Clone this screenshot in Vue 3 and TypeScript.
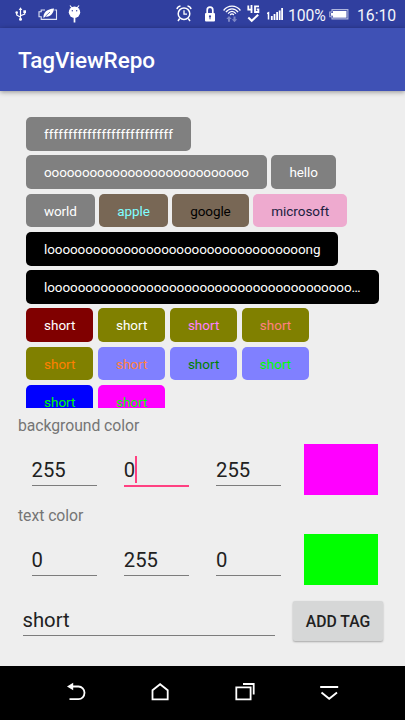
<script setup lang="ts">
import { computed, ref } from 'vue'

interface Tag {
  text: string
  bg: string
  fg: string
  spacing?: number
}

const GRAY = '#808080'
const BROWN = '#786755'
const OLIVE = '#808000'
const VIOLET = '#8080ff'

const tagRows = ref<Tag[][]>([
  [{ text: 'f'.repeat(27), bg: GRAY, fg: '#fff', spacing: 0.09 }],
  [
    { text: 'o'.repeat(27), bg: GRAY, fg: '#fff', spacing: -0.11 },
    { text: 'hello', bg: GRAY, fg: '#fff', spacing: -0.1 },
  ],
  [
    { text: 'world', bg: GRAY, fg: '#fff', spacing: -0.14 },
    { text: 'apple', bg: BROWN, fg: '#80ffff', spacing: -0.06 },
    { text: 'google', bg: BROWN, fg: '#000', spacing: -0.1 },
    { text: 'microsoft', bg: '#eeaacf', fg: '#202040', spacing: -0.02 },
  ],
  [{ text: 'l' + 'o'.repeat(34) + 'ng', bg: '#000', fg: '#fff', spacing: -0.1 }],
  [{ text: 'l' + 'o'.repeat(40) + '…', bg: '#000', fg: '#fff', spacing: -0.09 }],
  [
    { text: 'short', bg: '#800000', fg: '#fff' },
    { text: 'short', bg: OLIVE, fg: '#fff' },
    { text: 'short', bg: OLIVE, fg: '#ff80ff' },
    { text: 'short', bg: OLIVE, fg: '#ff8080' },
  ],
  [
    { text: 'short', bg: OLIVE, fg: '#ff8000' },
    { text: 'short', bg: VIOLET, fg: '#ff8040' },
    { text: 'short', bg: VIOLET, fg: '#008000' },
    { text: 'short', bg: VIOLET, fg: '#00ff00' },
  ],
  [
    { text: 'short', bg: '#0000ff', fg: '#00ff00' },
    { text: 'short', bg: '#ff00ff', fg: '#00ff00' },
  ],
])

const background = ref([255, 0, 255])
const foreground = ref([0, 255, 0])
const tagText = ref('short')

const groups = computed(() => [
  { label: 'background color', values: background.value, focus: 1 },
  { label: 'text color', values: foreground.value, focus: -1 },
])

const rgb = (v: number[]): string => `rgb(${v.join(',')})`

function addTag(): void {
  tagRows.value.push([
    { text: tagText.value, bg: rgb(background.value), fg: rgb(foreground.value) },
  ])
}
</script>

<template>
  <div class="screen">
    <div class="status">
      <svg class="i-usb" width="12" height="14" viewBox="0 0 12 14" fill="none" stroke="#fff" stroke-width="1.2">
        <path d="M5.5 2v10M5.5 10.2L1.7 8V5.5M5.5 8.7L9.7 7V4.5" />
        <path d="M3.7 3L5.5 0.3L7.3 3z" fill="#fff" stroke="none" />
        <circle cx="1.7" cy="5.6" r="1.3" fill="#fff" stroke="none" />
        <circle cx="5.5" cy="12.2" r="1.5" fill="#fff" stroke="none" />
        <path d="M8.3 3.3h2.7v2.7h-2.7z" fill="#fff" stroke="none" />
      </svg>
      <svg class="i-eco" width="20" height="13" viewBox="0 0 20 13" fill="none" stroke="#dfe3f5" stroke-width="1.1">
        <path d="M7 2H3.2v1.8H1v5h2.2v2.6h15.3V2h-2" />
        <path d="M5.5 10C5 4.500 9 1.200 16 0.600C15.500 5.500 12.500 9.200 7.500 8.600z" fill="#fff" stroke="none" />
        <path d="M7.500 8.200L12 4" stroke="#303f9f" stroke-width=".7" />
      </svg>
      <svg class="i-bug" width="13" height="18" viewBox="0 0 13 18">
        <path d="M2 .5L4 3M11 .5L9 3" stroke="#fff" stroke-width="1.2" />
        <circle cx="6.500" cy="7.300" r="5.700" fill="#fff" />
        <path d="M6.500 12v5.500" stroke="#fff" stroke-width="1.700" />
        <circle cx="4.300" cy="5.700" r=".7" fill="#303f9f" />
        <circle cx="8.700" cy="5.700" r=".7" fill="#303f9f" />
      </svg>
      <span class="spacer"></span>
      <svg class="i-alarm" width="16" height="17" viewBox="0 0 16 17" fill="none" stroke="#fff" stroke-width="1.500">
        <circle cx="8" cy="8.700" r="5.800" />
        <path d="M8 5.300v3.900h3" stroke-width="1.300" />
        <path d="M1 4.200C1.300 2.500 2.700 1.200 4.500 1M15 4.200C14.700 2.500 13.300 1.200 11.500 1M3.700 13.500L2 16M12.300 13.500L14 16" />
      </svg>
      <svg class="i-lock" width="10" height="16" viewBox="0 0 10 16">
        <path d="M2.200 8V4a2.800 2.800 0 0 1 5.600 0v4" fill="none" stroke="#fff" stroke-width="1.700" />
        <rect x="0" y="7" width="10" height="8.500" rx="1" fill="#fff" />
        <circle cx="5" cy="10.300" r="1.100" fill="#303f9f" />
        <path d="M5 10v3.300" stroke="#303f9f" stroke-width="1" />
      </svg>
      <svg class="i-wifi" width="18" height="18" viewBox="0 0 18 18" fill="none" stroke="#fff" stroke-width="1.300">
        <path d="M.6 5.500C5-.3 13-.3 17.400 5.500M2.900 7.200C6.200 2.700 11.800 2.700 15.100 7.200M5.100 8.700C7.300 5.700 10.700 5.700 12.900 8.700M7.200 10C8.300 8.600 9.700 8.600 10.800 10" />
        <path d="M6 11L3.300 14H5v2.700h2V14h1.700zM11.500 17.200L8.800 14.300h1.700v-2.700h2v2.700h1.700z" fill="#7d87c5" stroke="none" />
      </svg>
      <svg class="i-4g" width="13" height="18" viewBox="0 0 13 18" fill="none" stroke="#fff" stroke-width="1.800">
        <path d="M1.300 0.500v4.200h4.200M4.500 0v8M12 1.300H8v5.700h3.400V4.300H9.700" />
        <path d="M1.300 12.500L4.700 15.800L11.200 9.800" stroke-width="2" />
      </svg>
      <svg class="i-signal" width="16" height="12" viewBox="0 0 16 12" stroke="#fff">
        <path d="M0 5.500L1.500 4.700V11.500" fill="none" stroke-width="1.500" />
        <path d="M4.800 12V8M7.500 12V6M10.100 12V4M12.700 12V2.500M15.100 12V0" stroke-width="1.800" />
      </svg>
      <span class="percent">100%</span>
      <svg class="i-battery" width="20" height="11" viewBox="0 0 20 11">
        <path d="M3 .6h15.900v9.300H3V7.700H.8V3H3z" fill="none" stroke="#aeb5dc" stroke-width="1.100" />
        <rect x="4" y="2" width="13.500" height="6.700" fill="#fff" />
        <path d="M2 4h2v2.800H2z" fill="#fff" />
      </svg>
      <span class="clock">16:10</span>
    </div>

    <header class="appbar">TagViewRepo</header>

    <main class="content">
      <div class="tags">
        <div v-for="(row, r) in tagRows" :key="r" class="tag-row">
          <span
            v-for="(tag, t) in row"
            :key="t"
            class="tag"
            :style="{ background: tag.bg, color: tag.fg, letterSpacing: (tag.spacing ?? 0) + 'px' }"
          >{{ tag.text }}</span>
        </div>
      </div>

      <section v-for="g in groups" :key="g.label" class="group">
        <div class="label">{{ g.label }}</div>
        <div class="channels">
          <div v-for="(v, n) in g.values" :key="n" class="cell">
            <div class="field" :class="{ focused: n === g.focus }">
              <span>{{ v }}</span><i v-if="n === g.focus" class="caret"></i>
            </div>
          </div>
          <div class="cell">
            <div class="swatch" :style="{ background: rgb(g.values) }"></div>
          </div>
        </div>
      </section>

      <div class="add">
        <div class="field wide"><span>{{ tagText }}</span></div>
        <button class="btn" type="button" @click="addTag">ADD TAG</button>
      </div>
    </main>

    <nav class="nav">
      <svg width="24" height="24" viewBox="0 0 24 24" fill="none" stroke="#fff" stroke-width="1.800">
        <path d="M7 6.500h7.500a6 6.300 0 0 1 0 12.600H5.500" />
        <path d="M3 6.500L9.200 2.800v7.400z" fill="#fff" stroke="none" />
      </svg>
      <svg width="24" height="24" viewBox="0 0 24 24" fill="none" stroke="#fff" stroke-width="1.800">
        <path d="M4.500 19.300V10.200L12.100 4.200L19.700 10.200V19.300z" />
      </svg>
      <svg width="24" height="24" viewBox="0 0 24 24" fill="none" stroke="#fff" stroke-width="1.800">
        <path d="M3.300 7.300h14.300v12H3.300z" />
        <path d="M10 4H20.700V14.500" />
      </svg>
      <svg width="24" height="24" viewBox="0 0 24 24" fill="none" stroke="#fff" stroke-width="1.900">
        <path d="M3.200 7h18M4.500 12.500L12.200 18.700L20 12.500" />
      </svg>
    </nav>
  </div>
</template>

<style>
body {
  background: #eeeeee;
  overflow: hidden;
}
</style>

<style scoped>
.screen {
  display: flex;
  flex-direction: column;
  width: 405px;
  height: 720px;
  overflow: hidden;
  background: #eeeeee;
  font-family: Roboto, 'Liberation Sans', sans-serif;
  color: #212121;
}
.status {
  display: flex;
  flex: none;
  align-items: flex-start;
  height: 28px;
  padding: 0 9px 0 15px;
  box-sizing: border-box;
  background: #303f9f;
  color: #f4f5fb;
  font-size: 15.75px;
  line-height: 31px;
  white-space: nowrap;
}
.status svg { flex: none; }
.spacer { flex: 1; }
.i-usb { margin-top: 7px; }
.i-eco { margin: 8px 0 0 11px; }
.i-bug { margin: 5px 0 0 10px; }
.i-alarm { margin-top: 5px; }
.i-lock { margin: 6px 0 0 13px; }
.i-wifi { margin: 5px 0 0 8px; }
.i-4g { margin: 5px 0 0 6px; }
.i-signal { margin: 8px 0 0 7px; }
.percent { width: 37px; margin-left: 5px; letter-spacing: -0.1px; }
.i-battery { margin: 9px 0 0 4px; }
.clock { width: 39px; margin-left: 8px; }
.appbar {
  position: relative;
  flex: none;
  height: 63px;
  padding-left: 18px;
  background: #3f51b5;
  box-shadow: 0 1px 5px rgba(0, 0, 0, 0.4);
  color: #fff;
  font-size: 22.5px;
  font-weight: 500;
  letter-spacing: -0.08px;
  line-height: 65px;
}
.content {
  display: flex;
  flex: 1;
  flex-direction: column;
  padding: 18px 18px 0;
}
.tags {
  display: flex;
  flex: none;
  flex-direction: column;
  gap: 4.5px;
  height: 298.5px;
  padding: 8px 8px 0;
  box-sizing: border-box;
  overflow: hidden;
}
.tag-row {
  display: flex;
  flex: none;
  gap: 4.5px;
}
.tag {
  height: 33.75px;
  padding: 0 18px;
  border-radius: 5px;
  font-size: 13.5px;
  line-height: 34px;
  white-space: nowrap;
}
.group {
  flex: none;
  height: 90.25px;
}
.label {
  height: 27.5px;
  color: #757575;
  font-size: 15.75px;
  letter-spacing: -0.05px;
  line-height: 35px;
}
.channels {
  display: grid;
  grid-template-columns: repeat(4, 1fr);
}
.cell { padding: 9px 9px 0; }
.field {
  display: flex;
  align-items: center;
  height: 41px;
  margin: 0 4.5px;
  padding-top: 9px;
  box-sizing: border-box;
  border-bottom: 1px solid #7c7c7c;
  font-size: 20.25px;
  line-height: 24px;
}
.cell .field { margin: 1px 0 0 4.5px; width: 65px; }
.cell .field.focused {
  height: 42px;
  border-bottom: 2px solid #ff4081;
}
.caret {
  flex: none;
  width: 1.5px;
  height: 27px;
  background: #ff4081;
}
.swatch { height: 50.6px; }
.add {
  display: flex;
  align-items: flex-start;
  padding-top: 12.5px;
}
.wide {
  flex: none;
  width: 252px;
  height: 35px;
  padding-top: 4px;
}
.btn {
  width: 90px;
  height: 40px;
  margin-left: 14px;
  padding: 0;
  border: 0;
  border-radius: 2px;
  background: #d6d7d7;
  box-shadow: 0 1px 2px rgba(0, 0, 0, 0.3);
  color: #212121;
  font: 500 15.75px/42px Roboto, sans-serif;
}
.nav {
  display: flex;
  flex: none;
  gap: 60.300px;
  height: 54px;
  padding: 14px 0 0 64px;
  box-sizing: border-box;
  background: #000;
}
</style>
